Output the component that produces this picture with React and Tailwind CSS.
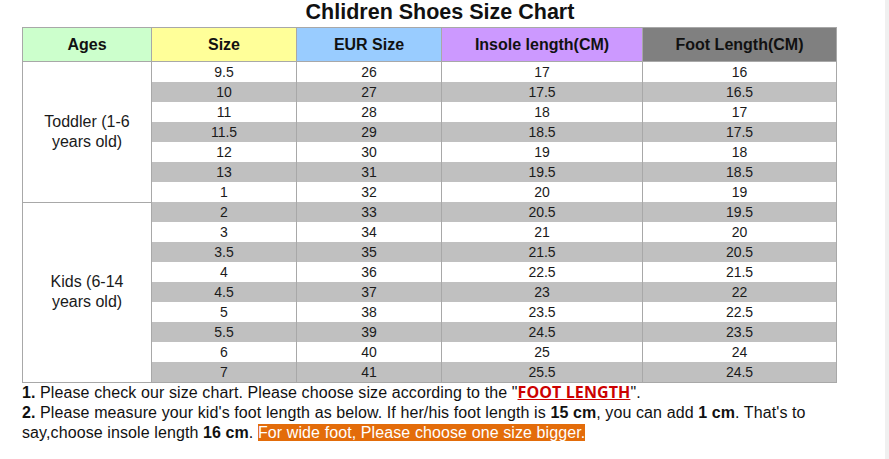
import React from "react";

const headers = [
  { label: "Ages", bg: "bg-[#ccffcc]", w: "w-[129px]" },
  { label: "Size", bg: "bg-[#ffff99]", w: "w-[145px]" },
  { label: "EUR Size", bg: "bg-[#99ccff]", w: "w-[145px]" },
  { label: "Insole length(CM)", bg: "bg-[#cc99ff]", w: "w-[201px]" },
  { label: "Foot Length(CM)", bg: "bg-[#808080]", w: "w-[194px]" },
];

const rows = [
  ["9.5", "26", "17", "16"],
  ["10", "27", "17.5", "16.5"],
  ["11", "28", "18", "17"],
  ["11.5", "29", "18.5", "17.5"],
  ["12", "30", "19", "18"],
  ["13", "31", "19.5", "18.5"],
  ["1", "32", "20", "19"],
  ["2", "33", "20.5", "19.5"],
  ["3", "34", "21", "20"],
  ["3.5", "35", "21.5", "20.5"],
  ["4", "36", "22.5", "21.5"],
  ["4.5", "37", "23", "22"],
  ["5", "38", "23.5", "22.5"],
  ["5.5", "39", "24.5", "23.5"],
  ["6", "40", "25", "24"],
  ["7", "41", "25.5", "24.5"],
];

const App = () => {
  return (
    <div className="flex h-[459px] w-[889px] overflow-hidden bg-white font-['Liberation_Sans',Arial,sans-serif] text-[#1a1a1a]">
      <div className="flex-1 pl-[22px]">
        <h1 className="h-[27px] w-[814px] pl-[22px] text-center text-[21.5px] font-bold leading-[24px] text-[#111]">
          Chlidren Shoes Size Chart
        </h1>
        <table className="w-[814px] table-fixed border-collapse border border-[#a8a8a8]">
          <thead>
            <tr className="h-[34px]">
              {headers.map((h) => (
                <th
                  key={h.label}
                  className={`${h.bg} ${h.w} border border-[#a8a8a8] p-0 text-center text-[16px] font-bold text-[#111]`}
                >
                  {h.label}
                </th>
              ))}
            </tr>
          </thead>
          <tbody>
            {rows.map((r, i) => (
              <tr key={i} className={`h-[20px] ${i % 2 === 0 ? "bg-white" : "bg-[#c0c0c0]"}`}>
                {i === 0 && (
                  <td rowSpan={7} className="border border-[#a8a8a8] bg-white px-2 text-center text-[16px] leading-[20px]">
                    Toddler (1-6
                    <br />
                    years old)
                  </td>
                )}
                {i === 7 && (
                  <td rowSpan={9} className="border border-[#a8a8a8] bg-white px-2 text-center text-[16px] leading-[20px]">
                    Kids (6-14
                    <br />
                    years old)
                  </td>
                )}
                {r.map((v, j) => (
                  <td
                    key={j}
                    className="border-x border-[#a8a8a8] p-0 text-center text-[14px] leading-[20px]"
                  >
                    {v}
                  </td>
                ))}
              </tr>
            ))}
          </tbody>
        </table>
        <div className="w-[814px] text-[16px] leading-[20px] tracking-[0.1px] text-[#111]">
          <p className="h-[20px]">
            <b>1.</b> Please check our size chart. Please choose size according to the "
            <span className="font-['Open_Sans',sans-serif] text-[16px] leading-[16px] font-bold text-[#cc0000] underline">
              FOOT LENGTH
            </span>
            ".
          </p>
          <p>
            <b>2.</b> Please measure your kid's foot length as below. If her/his foot length is{" "}
            <b>15 cm</b>, you can add <b>1 cm</b>. That's to say,choose insole length <b>16 cm</b>.{" "}
            <span className="bg-[#e36c0a] text-white">For wide foot, Please choose one size bigger.</span>
          </p>
        </div>
      </div>
      <div className="w-[4px] bg-[#f0f0f0]" />
    </div>
  );
};

export default App;
